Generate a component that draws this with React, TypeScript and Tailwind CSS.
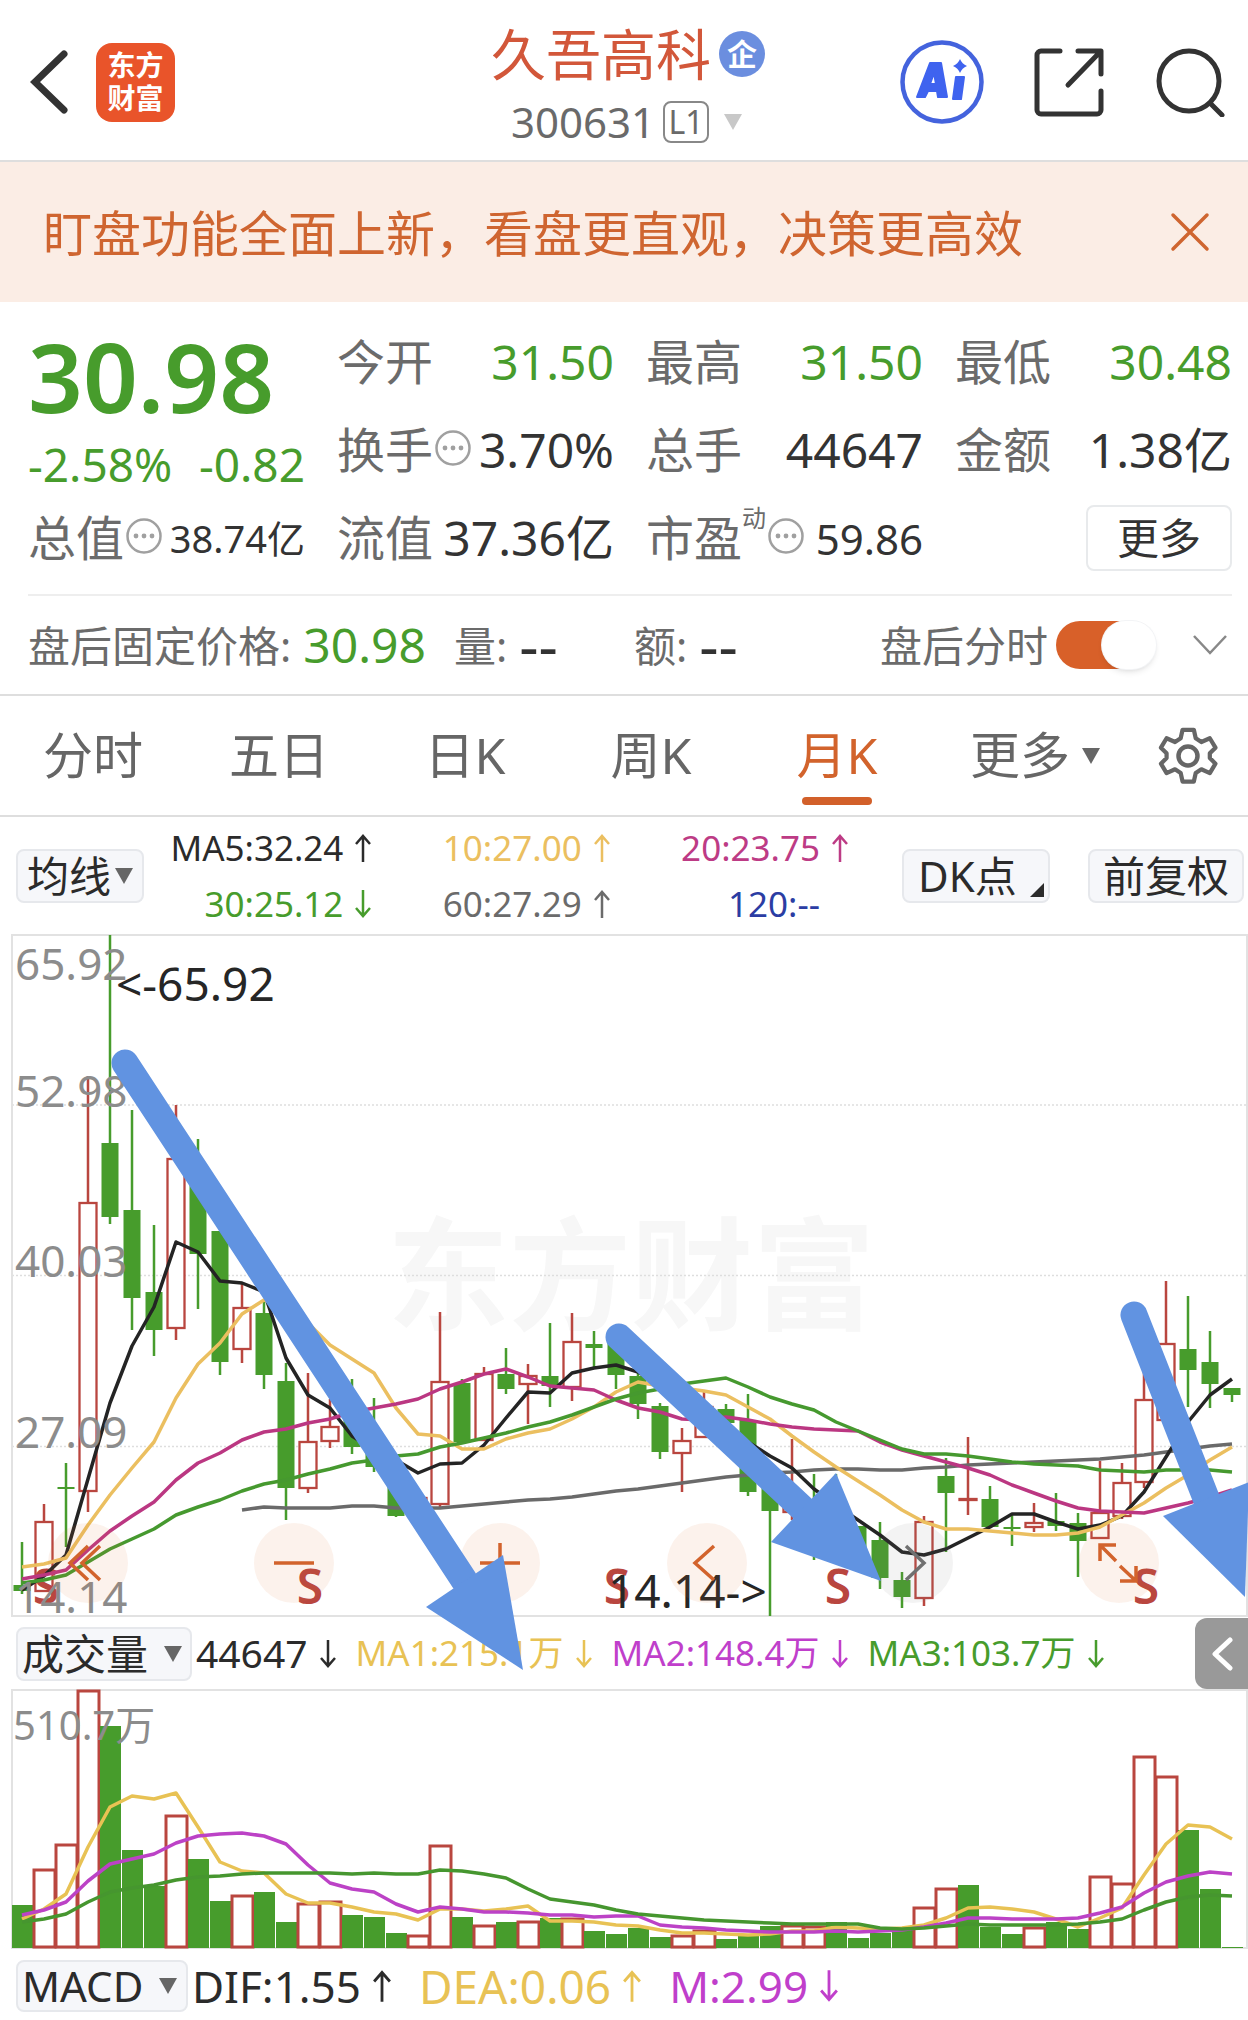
import React, { useState } from "react";

type Candle = [kind: "r" | "g", high: number, top: number, bottom: number, low: number];

const RED = "#b9463f";
const GREEN = "#479c2c";

const xAt = (i: number) => 22 + 22 * i;

const candles: Candle[] = [
  ["g", 1542, 1585, 1591, 1594],
  ["r", 1504, 1521, 1591, 1591],
  ["g", 1463, 1487, 1489, 1547],
  ["r", 1076, 1202, 1491, 1512],
  ["g", 935, 1143, 1217, 1224],
  ["g", 1110, 1210, 1298, 1330],
  ["g", 1225, 1292, 1330, 1356],
  ["r", 1105, 1158, 1328, 1340],
  ["g", 1139, 1178, 1254, 1309],
  ["g", 1231, 1231, 1362, 1375],
  ["r", 1284, 1307, 1349, 1363],
  ["g", 1301, 1313, 1375, 1389],
  ["g", 1363, 1381, 1488, 1520],
  ["r", 1373, 1441, 1488, 1493],
  ["r", 1399, 1426, 1441, 1448],
  ["g", 1379, 1412, 1447, 1454],
  ["g", 1398, 1440, 1467, 1472],
  ["g", 1470, 1470, 1516, 1517],
  ["r", 1494, 1497, 1508, 1510],
  ["r", 1312, 1381, 1504, 1509],
  ["g", 1379, 1383, 1442, 1442],
  ["r", 1367, 1373, 1440, 1440],
  ["g", 1348, 1374, 1389, 1394],
  ["r", 1364, 1375, 1384, 1424],
  ["g", 1323, 1376, 1386, 1407],
  ["r", 1313, 1341, 1387, 1401],
  ["g", 1331, 1344, 1348, 1368],
  ["g", 1336, 1342, 1375, 1389],
  ["g", 1371, 1376, 1404, 1419],
  ["g", 1403, 1406, 1452, 1459],
  ["r", 1428, 1440, 1453, 1492],
  ["r", 1390, 1406, 1437, 1437],
  ["g", 1404, 1409, 1423, 1423],
  ["g", 1394, 1420, 1492, 1496],
  ["g", 1480, 1488, 1511, 1616],
  ["r", 1439, 1490, 1512, 1520],
  ["g", 1474, 1500, 1520, 1560],
  ["g", 1474, 1500, 1530, 1545],
  ["g", 1526, 1526, 1555, 1560],
  ["g", 1522, 1540, 1578, 1589],
  ["g", 1572, 1580, 1597, 1608],
  ["r", 1516, 1521, 1598, 1606],
  ["g", 1458, 1476, 1493, 1552],
  ["r", 1437, 1498, 1500, 1515],
  ["g", 1486, 1499, 1527, 1527],
  ["g", 1513, 1527, 1529, 1546],
  ["r", 1503, 1522, 1527, 1532],
  ["g", 1493, 1521, 1526, 1531],
  ["g", 1513, 1523, 1541, 1577],
  ["r", 1461, 1512, 1538, 1538],
  ["r", 1463, 1482, 1516, 1519],
  ["r", 1370, 1399, 1482, 1488],
  ["r", 1281, 1343, 1420, 1420],
  ["g", 1296, 1349, 1370, 1407],
  ["g", 1331, 1362, 1384, 1408],
  ["g", 1388, 1388, 1395, 1402],
];

const ma5 = [
  1590, 1576, 1555, 1479, 1403, 1346, 1307, 1242, 1252, 1281, 1283, 1292, 1358, 1395, 1408, 1436, 1450, 1460, 1473,
  1464, 1463, 1445, 1418, 1392, 1393, 1373, 1368, 1365, 1372, 1385, 1404, 1412, 1425, 1442, 1456, 1468, 1489, 1505,
  1520, 1535, 1552, 1555, 1549, 1538, 1527, 1514, 1514, 1522, 1529, 1525, 1516, 1492, 1457, 1422, 1395, 1379,
];
const ma10 = [
  1567, 1564, 1558, 1525, 1495, 1468, 1442, 1398, 1364, 1343, 1314, 1300, 1309, 1323, 1345, 1359, 1373, 1408, 1434,
  1436, 1449, 1449, 1439, 1433, 1429, 1419, 1407, 1392, 1382, 1386, 1388, 1391, 1395, 1407, 1419, 1436, 1452, 1467,
  1481, 1495, 1510, 1522, 1529, 1529, 1531, 1533, 1535, 1535, 1533, 1527, 1515, 1503, 1488, 1475, 1460, 1447,
];
const ma20 = [
  1579, 1575, 1570, 1550, 1531, 1516, 1502, 1480, 1463, 1453, 1440, 1432, 1429, 1423, 1419, 1412, 1408, 1404, 1399,
  1389, 1382, 1374, 1369, 1377, 1386, 1388, 1390, 1400, 1408, 1412, 1419, 1420, 1417, 1420, 1424, 1427, 1429, 1430,
  1431, 1442, 1450, 1456, 1462, 1468, 1475, 1485, 1493, 1501, 1508, 1511, 1512, 1513, 1508, 1503, 1497, 1490,
];
const ma30 = [
  1583, 1580, 1575, 1562, 1549, 1539, 1529, 1515, 1507, 1500, 1491, 1484, 1480, 1474, 1469, 1463, 1460, 1456, 1454,
  1447, 1443, 1438, 1433, 1427, 1422, 1415, 1407, 1399, 1393, 1389, 1384, 1381, 1378, 1387, 1397, 1404, 1410, 1422,
  1431, 1440, 1449, 1454, 1454, 1456, 1459, 1462, 1464, 1465, 1466, 1470, 1471, 1472, 1470, 1470, 1470, 1472,
];
const ma60 = [
  1510, 1507, 1508, 1508, 1508, 1506, 1506, 1508, 1508, 1508, 1506, 1504, 1502, 1500, 1499, 1497, 1494, 1491, 1489,
  1486, 1483, 1480, 1477, 1475, 1473, 1472, 1470, 1469, 1469, 1470, 1470, 1468, 1467, 1465, 1464, 1463, 1462, 1461,
  1460, 1459, 1457, 1455, 1452, 1449, 1446, 1444,
];

const volumes: ["r" | "g", number][] = [
  ["g", 1905], ["r", 1869], ["r", 1844], ["r", 1690], ["g", 1726], ["g", 1850], ["g", 1886], ["r", 1815],
  ["g", 1859], ["g", 1901], ["r", 1895], ["g", 1892], ["g", 1922], ["r", 1903], ["r", 1901], ["g", 1915],
  ["g", 1917], ["g", 1933], ["r", 1935], ["r", 1845], ["g", 1917], ["r", 1925], ["g", 1922], ["r", 1921],
  ["g", 1918], ["r", 1918], ["g", 1931], ["g", 1934], ["g", 1928], ["g", 1937], ["r", 1935], ["r", 1930],
  ["g", 1939], ["g", 1936], ["g", 1926], ["r", 1925], ["r", 1926], ["g", 1922], ["g", 1938], ["g", 1933],
  ["g", 1930], ["r", 1907], ["r", 1888], ["g", 1885], ["g", 1927], ["g", 1934], ["r", 1927], ["g", 1922],
  ["g", 1929], ["r", 1876], ["r", 1883], ["r", 1756], ["r", 1776], ["g", 1830], ["g", 1889], ["g", 1947],
];
const volMa1 = [
  1919, 1909, 1894, 1847, 1807, 1796, 1799, 1793, 1827, 1862, 1871, 1873, 1894, 1903, 1903, 1907, 1912, 1914, 1920,
  1909, 1909, 1911, 1909, 1906, 1921, 1921, 1922, 1925, 1926, 1930, 1933, 1933, 1934, 1935, 1934, 1931, 1931, 1927,
  1928, 1929, 1928, 1925, 1918, 1908, 1907, 1909, 1912, 1919, 1927, 1918, 1908, 1875, 1844, 1825, 1827, 1839,
];
const volMa2 = [
  1915, 1910, 1902, 1881, 1864, 1859, 1854, 1843, 1836, 1834, 1833, 1836, 1844, 1865, 1883, 1889, 1892, 1904, 1912,
  1907, 1909, 1912, 1912, 1913, 1915, 1915, 1917, 1916, 1916, 1925, 1927, 1928, 1930, 1931, 1932, 1932, 1932, 1931,
  1932, 1931, 1930, 1927, 1923, 1918, 1918, 1919, 1919, 1919, 1918, 1913, 1907, 1893, 1882, 1876, 1872, 1874,
];
const volMa3 = [
  1922, 1919, 1914, 1902, 1892, 1888, 1885, 1880, 1877, 1876, 1874, 1873, 1873, 1873, 1873, 1874, 1873, 1874, 1874,
  1870, 1871, 1874, 1878, 1889, 1899, 1902, 1905, 1910, 1914, 1916, 1918, 1920, 1921, 1922, 1923, 1924, 1924, 1924,
  1924, 1928, 1929, 1928, 1926, 1924, 1925, 1925, 1925, 1925, 1924, 1922, 1919, 1910, 1902, 1897, 1895, 1896,
];

function Line({ data, color, start = 0 }: { data: number[]; color: string; start?: number }) {
  return (
    <polyline
      points={data.map((y, i) => `${xAt(i + start)},${y}`).join(" ")}
      fill="none"
      stroke={color}
      strokeWidth="3.5"
      strokeLinejoin="round"
    />
  );
}

function Trend({ dir, className = "h-7 w-4" }: { dir: "up" | "down"; className?: string }) {
  return (
    <svg viewBox="0 0 16 28" className={`shrink-0 ${className}`} fill="none" stroke="currentColor" strokeWidth="2.5" role="img" aria-label={dir === "up" ? "上升" : "下降"}>
      {dir === "up" ? <path d="M8 28V2M1 10l7-8 7 8" /> : <path d="M8 0v26M1 18l7 8 7-8" />}
    </svg>
  );
}

function Caret({ className }: { className: string }) {
  return (
    <svg viewBox="0 0 18 16" className={className} fill="currentColor" aria-hidden="true">
      <path d="M0 0h18L9 16z" />
    </svg>
  );
}

function InfoButton({ label }: { label: string }) {
  return (
    <button type="button" aria-label={label} className="mb-1 ml-0.5 shrink-0">
      <svg viewBox="0 0 36 36" className="size-9" fill="none" stroke="#a0a0a0" strokeWidth="2.5">
        <circle cx="18" cy="18" r="16.5" />
        <g fill="#a0a0a0" stroke="none">
          <circle cx="10" cy="18" r="2.4" />
          <circle cx="18" cy="18" r="2.4" />
          <circle cx="26" cy="18" r="2.4" />
        </g>
      </svg>
    </button>
  );
}

function Stat({ label, value, tone = "text-[#333333]", size = "text-[48px]", info, sup }: {
  label: string; value: string; tone?: string; size?: string; info?: boolean; sup?: string;
}) {
  return (
    <div className="flex items-center whitespace-nowrap">
      <span className="flex items-center text-[48px] text-[#6b6b6b]">
        {label}
        {sup && <sup className="static self-start text-2xl">{sup}</sup>}
        {info && <InfoButton label={`${label}说明`} />}
      </span>
      <span className={`ml-auto ${size} ${tone}`}>{value}</span>
    </div>
  );
}

function Header() {
  return (
    <header className="grid h-[162px] grid-cols-[1fr_auto_1fr] items-center border-b-2 border-[#dedede] pt-1 pr-[22px] pl-[30px]">
      <div className="flex items-center gap-7">
        <button type="button" aria-label="返回">
          <svg viewBox="0 0 38 64" className="h-16 w-[38px]" fill="none" stroke="#333" strokeWidth="7" strokeLinecap="round">
            <path d="M34 4 5 32l29 28" />
          </svg>
        </button>
        <div className="flex size-[79px] flex-col items-center justify-center rounded-2xl bg-[#e9542a] text-[28px] leading-[33px] font-bold text-white">
          <span>东方</span>
          <span>财富</span>
        </div>
      </div>
      <div className="flex flex-col items-center pt-3">
        <h1 className="flex items-center gap-2 text-[55px] leading-[68px] text-[#d2573a]">
          久吾高科
          <span className="flex size-[46px] items-center justify-center rounded-full bg-[#6b8edf] text-[30px] leading-none font-bold text-white">企</span>
        </h1>
        <button type="button" className="flex items-center text-[42px] leading-[68px] text-[#6a6a6a]">
          300631
          <span className="ml-2 flex h-[42px] w-[46px] items-center justify-center rounded-lg border-2 border-[#888888] text-[32px] leading-none">L1</span>
          <Caret className="ml-3 h-4 w-6 text-[#c8c8c8]" />
        </button>
      </div>
      <div className="flex items-center justify-end">
        <button type="button" aria-label="Ai 助手" className="mr-[50px]">
          <svg viewBox="0 0 84 84" className="size-[84px]">
            <circle cx="42" cy="42" r="39.5" fill="none" stroke="#4463dd" strokeWidth="4.5" />
            <path fillRule="evenodd" fill="#3f63ef" stroke="#3f63ef" strokeWidth="2" strokeLinejoin="round" d="M30 23h11l6 34h-9l-1-6h-9l-3 6h-8zM34 33l-4 11h6z" />
            <path fill="#3f63ef" stroke="#3f63ef" strokeWidth="2" strokeLinejoin="round" d="M56 37h8l-3 22h-8z" />
            <path fill="#3f63ef" d="M60 19q2 5 7 7-5 2-7 7-2-5-7-7 5-2 7-7z" />
          </svg>
        </button>
        <button type="button" aria-label="分享" className="mr-[52px]">
          <svg viewBox="0 0 70 70" className="size-[70px]" fill="none" stroke="#333" strokeWidth="5" strokeLinecap="round" strokeLinejoin="round">
            <path d="M26 4H7a4 4 0 0 0-4 4v55a4 4 0 0 0 4 4h56a4 4 0 0 0 4-4V44" />
            <path d="M44 4h23v23M66 5 34 38" />
          </svg>
        </button>
        <button type="button" aria-label="搜索">
          <svg viewBox="0 0 70 70" className="size-[70px]" fill="none" stroke="#333" strokeWidth="5" strokeLinecap="round">
            <circle cx="33" cy="34" r="30" />
            <path d="m54 56 12 12" />
          </svg>
        </button>
      </div>
    </header>
  );
}

function Quote() {
  const [after, setAfter] = useState(true);
  return (
    <section className="border-b-2 border-[#dedede]">
      <div className="grid auto-rows-[88px] grid-cols-4 gap-x-8 pt-[16px] pr-4 pb-3 pl-7">
        <div className="row-span-2 flex flex-col text-[#479c2c]">
          <strong className="text-[96px] leading-[116px] font-semibold">30.98</strong>
          <div className="flex justify-between text-[46px] leading-[60px] whitespace-nowrap">
            <span>-2.58%</span>
            <span>-0.82</span>
          </div>
        </div>
        <Stat label="今开" value="31.50" tone="text-[#479c2c]" />
        <Stat label="最高" value="31.50" tone="text-[#479c2c]" />
        <Stat label="最低" value="30.48" tone="text-[#479c2c]" />
        <Stat label="换手" value="3.70%" info />
        <Stat label="总手" value="44647" />
        <Stat label="金额" value="1.38亿" />
        <Stat label="总值" value="38.74亿" size="text-[38px]" info />
        <Stat label="流值" value="37.36亿" />
        <Stat label="市盈" value="59.86" size="text-[42px]" sup="动" info />
        <div className="flex items-center justify-end">
          <button type="button" className="h-[66px] w-[146px] rounded-lg border-2 border-[#e8eaec] text-[42px] leading-none text-[#333333]">
            更多
          </button>
        </div>
      </div>
      <div className="ml-7 mr-4 flex h-[100px] items-center border-t-2 border-[#eeeeee] text-[42px] whitespace-nowrap text-[#6b6b6b]">
        <span>盘后固定价格:</span>
        <span className="ml-3 text-[48px] text-[#479c2c]">30.98</span>
        <span className="ml-7">量:</span>
        <span className="ml-3 text-[60px] leading-none text-[#333333]">--</span>
        <span className="ml-[76px]">额:</span>
        <span className="ml-3 text-[60px] leading-none text-[#333333]">--</span>
        <label className="ml-auto flex cursor-pointer items-center gap-2">
          盘后分时
          <input type="checkbox" className="peer sr-only" checked={after} onChange={(e) => setAfter(e.target.checked)} />
          <span className="flex h-12 w-[100px] justify-start rounded-full bg-gray-300 peer-checked:justify-end peer-checked:bg-[#d86029]">
            <span className="h-12 w-[54px] rounded-full bg-white shadow-md ring-1 ring-gray-100" />
          </span>
        </label>
        <button type="button" aria-label="展开" className="mr-1 ml-9">
          <svg viewBox="0 0 36 20" className="h-5 w-9" fill="none" stroke="#888" strokeWidth="2.5">
            <path d="m2 1 16 17L34 1" />
          </svg>
        </button>
      </div>
    </section>
  );
}

function Tabs() {
  const [tab, setTab] = useState("月K");
  return (
    <nav className="flex h-[121px] border-b-2 border-[#dedede] pr-3 text-[50px] text-[#666666]">
      {["分时", "五日", "日K", "周K", "月K"].map((t) => (
        <button
          key={t}
          type="button"
          onClick={() => setTab(t)}
          aria-current={tab === t ? "page" : undefined}
          className={`relative flex-[186] whitespace-nowrap ${tab === t ? "text-[#d2632c]" : ""}`}
        >
          {t}
          {tab === t && <span className="absolute inset-x-0 bottom-2.5 mx-auto h-2 w-[70px] rounded-full bg-[#d2602a]" />}
        </button>
      ))}
      <button type="button" className="flex flex-[210] items-center justify-center gap-3 whitespace-nowrap">
        更多
        <Caret className="h-4 w-[18px]" />
      </button>
      <button type="button" aria-label="设置" className="flex flex-[96] items-center justify-center">
        <svg viewBox="0 0 60 60" className="size-[60px]" fill="none" stroke="#666" strokeWidth="4.5" strokeLinejoin="round">
          <path d="M24 3h12l2 9 6 4 9-4 6 10-6 6v5l6 6-6 10-9-4-6 4-2 9H24l-2-9-6-4-9 4-6-10 6-6v-5l-6-6 6-10 9 4 6-4z" transform="translate(2 1) scale(.94)" />
          <circle cx="30" cy="30" r="9.5" />
        </svg>
      </button>
    </nav>
  );
}

const chip = "flex items-center rounded-lg border-2 border-[#e6e8ec] bg-[#f6f7fa] text-[42px] leading-none whitespace-nowrap text-[#2b2b2b]";

function MaItem({ text, color, dir }: { text: string; color: string; dir?: "up" | "down" }) {
  return (
    <div className={`flex items-center justify-end gap-3 text-[35px] leading-[56px] whitespace-nowrap ${color}`}>
      {text}
      {dir ? <Trend dir={dir} /> : <span className="w-4" />}
    </div>
  );
}

function MaBar() {
  return (
    <div className="flex h-[117px] items-center pr-1 pl-4">
      <button type="button" className={`${chip} h-[54px] w-32 justify-center gap-1`}>
        均线
        <Caret className="h-4 w-[18px] text-[#666666]" />
      </button>
      <div className="ml-6 grid flex-1 grid-cols-[204fr_239fr_239fr]">
        <MaItem text="MA5:32.24" color="text-[#2b2b2b]" dir="up" />
        <MaItem text="10:27.00" color="text-[#ebbf60]" dir="up" />
        <MaItem text="20:23.75" color="text-[#bd3b85]" dir="up" />
        <MaItem text="30:25.12" color="text-[#479c2c]" dir="down" />
        <MaItem text="60:27.29" color="text-[#6b6b6b]" dir="up" />
        <MaItem text="120:--" color="text-[#2b3da3]" />
      </div>
      <button type="button" className={`${chip} relative ml-[54px] h-[54px] w-[148px] pl-3.5`}>
        DK点
        <svg viewBox="0 0 14 14" className="absolute right-1 bottom-1 size-[14px]" fill="currentColor" aria-hidden="true">
          <path d="M14 0v14H0z" />
        </svg>
      </button>
      <button type="button" className={`${chip} ml-[38px] h-[54px] w-[156px] justify-center`}>前复权</button>
    </div>
  );
}

function PriceChart() {
  return (
    <svg viewBox="0 934 1248 684" className="block w-full" role="img" aria-label="月K线图">
      <text x="387" y="1320" fontSize="122" fontWeight="700" fill="#f7f7f7">东方财富</text>
      <g stroke="#dedede" strokeWidth="1.5" strokeDasharray="2 2">
        <path d="M12 1105H1247M12 1275.500H1247M12 1446.500H1247" />
      </g>
      <rect x="12" y="935" width="1235" height="681" fill="none" stroke="#e2e2e2" strokeWidth="2" />
      <g fill={RED} fontSize="48" fontWeight="600" textAnchor="middle">
        {[46, 310, 617, 838, 1146].map((x) => (
          <text key={x} x={x} y="1604">S</text>
        ))}
      </g>
      {candles.map(([kind, high, top, bottom, low], i) => {
        const color = kind === "r" ? RED : GREEN;
        return (
          <g key={i} stroke={color} strokeWidth="2.5">
            <path d={`M${xAt(i)} ${high}V${top}M${xAt(i)} ${bottom}V${low}`} />
            {kind === "g" ? (
              <rect x={xAt(i) - 8.5} y={top} width="17" height={bottom - top} fill={GREEN} stroke="none" />
            ) : (
              <rect x={xAt(i) - 8.5} y={top + 1} width="17" height={Math.max(bottom - top - 1, 1)} fill={i === 1 ? "none" : bottom - top > 2 ? "#ffffff" : RED} strokeWidth="2.3" />
            )}
          </g>
        );
      })}
      <Line data={ma60} color="#6a6a6a" start={10} />
      <Line data={ma5} color="#242424" />
      <Line data={ma10} color="#ebbf60" />
      <Line data={ma20} color="#bb3782" />
      <Line data={ma30} color="#46992f" />
      <g fill="#8c8c8c" fontSize="44">
        <text x="15" y="980">65.92</text>
        <text x="15" y="1107">52.98</text>
        <text x="15" y="1277">40.03</text>
        <text x="15" y="1448">27.09</text>
        <text x="15" y="1613">14.14</text>
      </g>
      <g fill="#262626" fontSize="46">
        <text x="116" y="1001">&lt;-65.92</text>
        <text x="608" y="1608">14.14-&gt;</text>
      </g>
    </svg>
  );
}

function ChartControls() {
  const items: { label: string; d: string; muted?: boolean }[] = [
    { label: "最左", d: "M40 23 22 40l18 17M52 23 34 40l18 17" },
    { label: "缩小", d: "M20 40h40" },
    { label: "放大", d: "M20 40h40M40 20v40" },
    { label: "左移", d: "M47 23 28 40l19 17" },
    { label: "右移", d: "M33 23 51 40 33 57", muted: true },
    { label: "全屏", d: "M37 22H21v16M21 22l16 16M41 58h16V43M57 58 41 43" },
  ];
  return (
    <div className="absolute right-[89px] bottom-[15px] left-12 flex justify-between">
      {items.map(({ label, d, muted }) => (
        <button
          key={label}
          type="button"
          aria-label={label}
          className={`size-20 rounded-full ${muted ? "bg-[#80808018] text-[#707070]" : "bg-[#e0703018] text-[#d2632c]"}`}
        >
          <svg viewBox="0 0 80 80" fill="none" stroke="currentColor" strokeWidth="3.5">
            <path d={d} />
          </svg>
        </button>
      ))}
    </div>
  );
}

function Indicator({ text, color, dir, size, arrow = "h-8 w-4" }: {
  text: string; color: string; dir: "up" | "down"; size: string; arrow?: string;
}) {
  return (
    <span className={`flex items-center gap-3 whitespace-nowrap ${size} ${color}`}>
      {text}
      <Trend dir={dir} className={arrow} />
    </span>
  );
}

function VolumeBar() {
  return (
    <div className="flex h-[71px] items-center pl-4">
      <button type="button" className={`${chip} h-[54px] w-[176px] gap-4 pl-1`}>
        成交量
        <Caret className="h-4 w-[18px] text-[#666666]" />
      </button>
      <div className="ml-1 flex flex-1 items-center gap-5">
        <Indicator text="44647" color="text-[#2b2b2b]" dir="down" size="text-[39px]" />
        <Indicator text="MA1:215.1万" color="text-[#e8c254]" dir="down" size="text-[35px]" />
        <Indicator text="MA2:148.4万" color="text-[#c03fcb]" dir="down" size="text-[35px]" />
        <Indicator text="MA3:103.7万" color="text-[#479c2c]" dir="down" size="text-[35px]" />
      </div>
      <button type="button" aria-label="展开侧栏" className="flex h-[71px] w-[53px] items-center justify-center rounded-l-xl bg-[#999999]">
        <svg viewBox="0 0 22 34" className="h-[34px] w-[22px]" fill="none" stroke="#fff" strokeWidth="5" strokeLinecap="round" strokeLinejoin="round">
          <path d="M19 3 4 17l15 14" />
        </svg>
      </button>
    </div>
  );
}

function Annotations() {
  return (
    <svg viewBox="0 934 1248 755" className="pointer-events-none absolute inset-x-0 top-0 w-full" aria-hidden="true">
      <g stroke="#6193e1" strokeWidth="27" strokeLinecap="round">
        <path d="M125 1063 464 1580" />
        <path d="M619 1337 802 1508" />
        <path d="M1134 1315 1206 1498" />
      </g>
      <g fill="#6193e1">
        <path d="M426 1607 503 1555 523 1670z" />
        <path d="M771 1542 836 1473 881 1581z" />
        <path d="M1163 1516 1249 1482 1245 1597z" />
      </g>
    </svg>
  );
}

function VolumeChart() {
  return (
    <svg viewBox="0 1689 1248 260" className="block w-full" role="img" aria-label="成交量图">
      <rect x="12" y="1690" width="1235" height="258" fill="none" stroke="#e2e2e2" strokeWidth="2" />
      {volumes.map(([kind, top], i) =>
        kind === "g" ? (
          <rect key={i} x={xAt(i) - 10} y={top} width="21" height={1948 - top} fill={GREEN} />
        ) : (
          <rect key={i} x={xAt(i) - 10} y={top + 1} width="21" height={1946 - top} fill="#ffffff" stroke={RED} strokeWidth="3" />
        )
      )}
      <Line data={volMa1} color="#e8c254" />
      <Line data={volMa2} color="#bc42c6" />
      <Line data={volMa3} color="#46962f" />
      <text x="13" y="1740" fill="#8c8c8c" fontSize="40">510.7万</text>
    </svg>
  );
}

export default function App() {
  const [banner, setBanner] = useState(true);
  return (
    <main lang="zh-CN" className="min-h-screen overflow-x-hidden bg-white font-['Noto_Sans','Noto_Sans_CJK_SC',sans-serif]">
      <Header />
      {banner && (
        <div className="flex h-[140px] items-center justify-between bg-[#fbede5] pt-1 pr-[38px] pl-[43px] text-[49px] whitespace-nowrap text-[#cf6530]">
          <p>盯盘功能全面上新，看盘更直观，决策更高效</p>
          <button type="button" aria-label="关闭" onClick={() => setBanner(false)} className="mb-1">
            <svg viewBox="0 0 40 40" className="size-10" fill="none" stroke="currentColor" strokeWidth="3.5" strokeLinecap="round">
              <path d="m3 3 34 34M37 3 3 37" />
            </svg>
          </button>
        </div>
      )}
      <Quote />
      <Tabs />
      <MaBar />
      <div className="relative">
        <div className="relative">
          <PriceChart />
          <ChartControls />
        </div>
        <VolumeBar />
        <Annotations />
      </div>
      <VolumeChart />
      <div className="flex h-[74px] items-center gap-7 pl-4">
        <div className="flex items-center gap-1">
          <button type="button" className={`${chip} h-[52px] w-[172px] gap-4 pl-1`}>
            MACD
            <Caret className="h-4 w-[18px] text-[#666666]" />
          </button>
          <Indicator text="DIF:1.55" color="text-[#2b2b2b]" dir="up" size="text-[44px]" arrow="h-8 w-[18px]" />
        </div>
        <Indicator text="DEA:0.06" color="text-[#e8c254]" dir="up" size="text-[46px]" arrow="h-8 w-[18px]" />
        <Indicator text="M:2.99" color="text-[#c03fcb]" dir="down" size="text-[44px]" arrow="h-8 w-[18px]" />
      </div>
    </main>
  );
}
